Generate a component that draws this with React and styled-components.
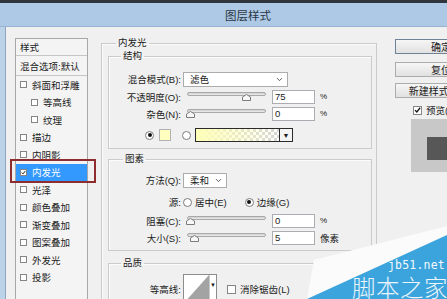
import React from 'react';
import styled, { createGlobalStyle } from 'styled-components';
import { ChevronDown } from 'lucide-react';

const GlobalStyle = createGlobalStyle`
  html, body {
    margin: 0;
    padding: 0;
  }
  body {
    width: 447px;
    height: 299px;
    overflow: hidden;
    background: #f0f0f0;
    font-family: "Liberation Sans", "Noto Sans CJK SC", sans-serif;
    font-size: 9.5px;
    color: #1b1b1b;
  }
  * {
    box-sizing: border-box;
  }
`;

const Screen = styled.div`
  position: relative;
  width: 447px;
  height: 299px;
  overflow: hidden;
`;

const Window = styled.div`
  width: 496px;
  height: 299px;
  display: flex;
  flex-direction: column;
`;

const TopStrip = styled.div`
  flex: none;
  height: 3px;
  background: #2f353c;
`;

const TitleBar = styled.div`
  flex: none;
  height: 24px;
  background: #adc9e6;
  border-bottom: 1px solid #97b3d0;
  display: flex;
  align-items: center;
  justify-content: center;
  font-family: "Noto Sans CJK SC", sans-serif;
  font-size: 11.5px;
  color: #2b3642;
`;

const Frame = styled.div`
  flex: 1;
  min-height: 0;
  display: flex;
  border-left: 5px solid #bcd2e9;
`;

const Body = styled.div`
  flex: 1;
  display: flex;
  align-items: flex-start;
  background: #f0f0f0;
  border-left: 1px solid #8fa6be;
`;

/* ---------- left style list ---------- */

const StyleList = styled.div`
  margin: 11px 0 0 9px;
  width: 73px;
  height: 280px;
  border: 1px solid #a8a8a8;
  background: #f4f4f4;
  flex: none;
`;

const ListHead = styled.div`
  height: ${(p) => p.$h}px;
  display: flex;
  align-items: center;
  padding-left: 4px;
  border-bottom: 1px solid #c6c6c6;
  white-space: nowrap;
`;

const ListItem = styled.div`
  position: relative;
  height: 17.5px;
  display: flex;
  align-items: center;
  gap: 5px;
  padding-left: ${(p) => (p.$indent ? 15 : 4)}px;
  white-space: nowrap;
  background: ${(p) => (p.$active ? '#3399ff' : 'transparent')};
  color: ${(p) => (p.$active ? '#fff' : 'inherit')};
`;

const Marker = styled.div`
  position: absolute;
  left: -6px;
  right: -9px;
  top: -5px;
  bottom: -2px;
  border: 2.5px solid #8f2c2e;
`;

const Check = styled.span`
  width: ${(p) => p.$size || 7}px;
  height: ${(p) => p.$size || 7}px;
  flex: none;
  border: 1px solid #858585;
  background: #fff;
  display: flex;
  align-items: center;
  justify-content: center;
`;

/* ---------- main settings ---------- */

const Main = styled.div`
  margin: 10px 0 0 13px;
  width: 276px;
  flex: none;
`;

const Group = styled.fieldset`
  margin: ${(p) => p.$mt || 0}px 0 0 0;
  padding: ${(p) => p.$pad};
  border: 1px solid #cbcbcb;
  box-shadow: inset 1px 1px 0 #fbfbfb;
  min-width: 0;
  height: ${(p) => (p.$h ? `${p.$h}px` : 'auto')};
`;

const Legend = styled.legend`
  margin-left: ${(p) => p.$indent}px;
  padding: 0 2px;
  line-height: 12px;
  font-size: 9.5px;
`;

const Row = styled.div`
  display: flex;
  align-items: center;
  height: ${(p) => p.$h || 17}px;
  margin-top: ${(p) => p.$mt || 0}px;
  padding-left: ${(p) => p.$pl || 0}px;
  white-space: nowrap;
`;

const Label = styled.span`
  width: 74px;
  flex: none;
  text-align: right;
  padding-right: 2px;
`;

const Select = styled.div`
  width: ${(p) => p.$w}px;
  height: 15px;
  border: 1px solid #acacac;
  background: #fff;
  display: flex;
  align-items: center;
  justify-content: space-between;
  padding: 0 3px 0 6px;
`;

const SliderWrap = styled.div`
  width: 79px;
  height: 11px;
  margin-left: 4px;
  position: relative;
`;

const Track = styled.div`
  height: 4px;
  margin-top: 1px;
  border: 1px solid #a9a9a9;
  border-radius: 2px;
  background: linear-gradient(#cfcfcf, #ececec);
`;

const Thumb = styled.svg`
  position: absolute;
  top: 3px;
`;

const NumberBox = styled.div`
  width: 43px;
  height: 14px;
  margin-left: 6px;
  border: 1px solid #abadb3;
  background: #fff;
  padding-left: 2px;
  display: flex;
  align-items: center;
`;

const Unit = styled.span`
  margin-left: 5px;
  font-size: ${(p) => p.$size || 8}px;
`;

const Radio = styled.span`
  width: 9px;
  height: 9px;
  flex: none;
  border-radius: 50%;
  border: 1px solid #7b7b7b;
  background: #fff;
  margin: ${(p) => p.$m || '0'};
  display: flex;
  align-items: center;
  justify-content: center;
  &::after {
    content: '';
    width: 4px;
    height: 4px;
    border-radius: 50%;
    background: ${(p) => (p.$on ? '#111' : 'transparent')};
  }
`;

const Swatch = styled.span`
  width: 12px;
  height: 12px;
  margin: 0 11px 0 5px;
  border: 1px solid #b2b2b2;
  background: #ffffc0;
`;

const GradientBar = styled.span`
  width: 85px;
  height: 14px;
  margin-left: 4px;
  border: 1px solid #2b2b2b;
  background-image: linear-gradient(to right, #ffffb8, rgba(255, 255, 184, 0)),
    repeating-conic-gradient(#d6d6d6 0 25%, #fff 0 50%);
  background-size: 100% 100%, 6px 6px;
`;

const DropButton = styled.span`
  width: 13px;
  height: 14px;
  border: 1px solid #2b2b2b;
  border-left: none;
  background: #f4f4f4;
  display: flex;
  align-items: center;
  justify-content: center;
  font-size: 7px;
`;

const RadioText = styled.span`
  margin-left: 3px;
`;

const Contour = styled.div`
  width: 34px;
  height: 30px;
  border: 1px solid #8c8c8c;
  background: #fff;
  display: flex;
`;

const ContourArrow = styled.span`
  flex: 1;
  border-left: 1px solid #c9c9c9;
  display: flex;
  align-items: flex-start;
  justify-content: center;
  padding-top: 7px;
  font-size: 6px;
`;

const CheckText = styled.span`
  margin-left: 4px;
`;

/* ---------- right buttons ---------- */

const Side = styled.div`
  margin: 12px 0 0 18px;
  width: 92px;
  flex: none;
`;

const Button = styled.div`
  height: 15px;
  margin-top: ${(p) => p.$mt || 0}px;
  border: 1px solid ${(p) => (p.$primary ? '#6f8396' : '#acacac')};
  background: linear-gradient(#f6f6f6, #e1e1e1);
  display: flex;
  align-items: center;
  justify-content: center;
  white-space: nowrap;
  font-size: 10px;
`;

const PreviewToggle = styled.div`
  height: 12px;
  margin-top: 6px;
  padding-left: 18px;
  display: flex;
  align-items: center;
`;

const Preview = styled.div`
  width: 64px;
  height: 53px;
  margin: 3px 0 0 16px;
  background: #c8c8c8;
  padding: 18px 0 0 16px;
`;

const PreviewSquare = styled.div`
  width: 32px;
  height: 23px;
  background: #575757;
`;

/* ---------- watermark ---------- */

const Watermark = styled.div`
  position: absolute;
  right: 0;
  bottom: 0;
  width: 140px;
  height: 75px;
`;

const WmSite = styled.span`
  position: absolute;
  right: 2px;
  top: 35px;
  font-family: "DejaVu Sans Mono", monospace;
  font-size: 11.5px;
  line-height: 13px;
  color: #f4faff;
  letter-spacing: 0.2px;
`;

const WmName = styled.span`
  position: absolute;
  right: -1px;
  top: 51px;
  font-family: "Noto Sans CJK SC", sans-serif;
  font-size: 23.5px;
  line-height: 24px;
  font-weight: 300;
  color: #eaf5fc;
  letter-spacing: 0.5px;
`;

const Tick = ({ size = 7 }) => (
  <svg width={size} height={size} viewBox="0 0 10 10">
    <path d="M1.5 5.2 L4 7.8 L8.8 1.8" fill="none" stroke="#111" strokeWidth="1.8" />
  </svg>
);

const Slider = ({ at }) => (
  <SliderWrap>
    <Track />
    <Thumb width="9" height="7" viewBox="0 0 9 7" style={{ left: at }}>
      <path d="M0.5 6.5 V3 L4.5 0.5 L8.5 3 V6.5 Z" fill="#f7f7f7" stroke="#7c7c7c" />
    </Thumb>
  </SliderWrap>
);

const listItems = [
  { name: '斜面和浮雕' },
  { name: '等高线', indent: true },
  { name: '纹理', indent: true },
  { name: '描边' },
  { name: '内阴影' },
  { name: '内发光', active: true },
  { name: '光泽' },
  { name: '颜色叠加' },
  { name: '渐变叠加' },
  { name: '图案叠加' },
  { name: '外发光' },
  { name: '投影' },
];

export default function App() {
  return (
    <Screen>
      <GlobalStyle />
      <Window>
        <TopStrip />
        <TitleBar>图层样式</TitleBar>
        <Frame>
          <Body>
            <StyleList>
              <ListHead $h={17}>样式</ListHead>
              <ListHead $h={20}>混合选项:默认</ListHead>
              {listItems.map((it) => (
                <ListItem key={it.name} $indent={it.indent} $active={it.active}>
                  <Check>{it.active && <Tick />}</Check>
                  {it.name}
                  {it.active && <Marker />}
                </ListItem>
              ))}
            </StyleList>

            <Main>
              <Group $pad="1px 4px 0 6px" $h={300}>
                <Legend $indent={8}>内发光</Legend>

                <Group $pad="8px 0 4px 0">
                  <Legend $indent={12}>结构</Legend>
                  <Row $h={18}>
                    <Label>混合模式(B):</Label>
                    <Select $w={105}>
                      滤色
                      <ChevronDown size={9} strokeWidth={2.5} color="#555" />
                    </Select>
                  </Row>
                  <Row>
                    <Label>不透明度(O):</Label>
                    <Slider at={55} />
                    <NumberBox>75</NumberBox>
                    <Unit>%</Unit>
                  </Row>
                  <Row>
                    <Label>杂色(N):</Label>
                    <Slider at={-1} />
                    <NumberBox>0</NumberBox>
                    <Unit>%</Unit>
                  </Row>
                  <Row $h={18} $mt={4} $pl={36}>
                    <Radio $on />
                    <Swatch />
                    <Radio />
                    <GradientBar />
                    <DropButton>▼</DropButton>
                  </Row>
                </Group>

                <Group $pad="6px 0 4px 0" $mt={4}>
                  <Legend $indent={14}>图素</Legend>
                  <Row $h={18}>
                    <Label>方法(Q):</Label>
                    <Select $w={44}>
                      柔和
                      <ChevronDown size={9} strokeWidth={2.5} color="#555" />
                    </Select>
                  </Row>
                  <Row $h={18} $mt={4}>
                    <Label>源:</Label>
                    <Radio />
                    <RadioText>居中(E)</RadioText>
                    <Radio $on $m="0 0 0 18px" />
                    <RadioText>边缘(G)</RadioText>
                  </Row>
                  <Row $mt={1}>
                    <Label>阻塞(C):</Label>
                    <Slider at={-1} />
                    <NumberBox>0</NumberBox>
                    <Unit>%</Unit>
                  </Row>
                  <Row>
                    <Label>大小(S):</Label>
                    <Slider at={3} />
                    <NumberBox>5</NumberBox>
                    <Unit $size={9.5}>像素</Unit>
                  </Row>
                </Group>

                <Group $pad="5px 0 0 0" $mt={6} $h={60}>
                  <Legend $indent={12}>品质</Legend>
                  <Row $h={30}>
                    <Label>等高线:</Label>
                    <Contour>
                      <svg width="25" height="28" viewBox="0 0 25 28">
                        <polygon points="0,28 25,0 25,28" fill="#a3a3a3" />
                      </svg>
                      <ContourArrow>▼</ContourArrow>
                    </Contour>
                    <Check $size={9} style={{ marginLeft: 10 }} />
                    <CheckText>消除锯齿(L)</CheckText>
                  </Row>
                </Group>
              </Group>
            </Main>

            <Side>
              <Button $primary>确定</Button>
              <Button $mt={8}>复位</Button>
              <Button $mt={6}>新建样式(W)...</Button>
              <PreviewToggle>
                <Check $size={9}>
                  <Tick size={8} />
                </Check>
                <CheckText>预览(V)</CheckText>
              </PreviewToggle>
              <Preview>
                <PreviewSquare />
              </Preview>
            </Side>
          </Body>
        </Frame>
      </Window>

      <Watermark>
        <svg width="140" height="75" viewBox="0 0 140 75">
          <polygon points="7,36 140,2 140,12 0,75" fill="#fbfbfb" />
          <polygon points="0,75 140,11 140,75" fill="#3ca4dc" />
        </svg>
        <WmSite>jb51.net</WmSite>
        <WmName>脚本之家</WmName>
      </Watermark>
    </Screen>
  );
}
